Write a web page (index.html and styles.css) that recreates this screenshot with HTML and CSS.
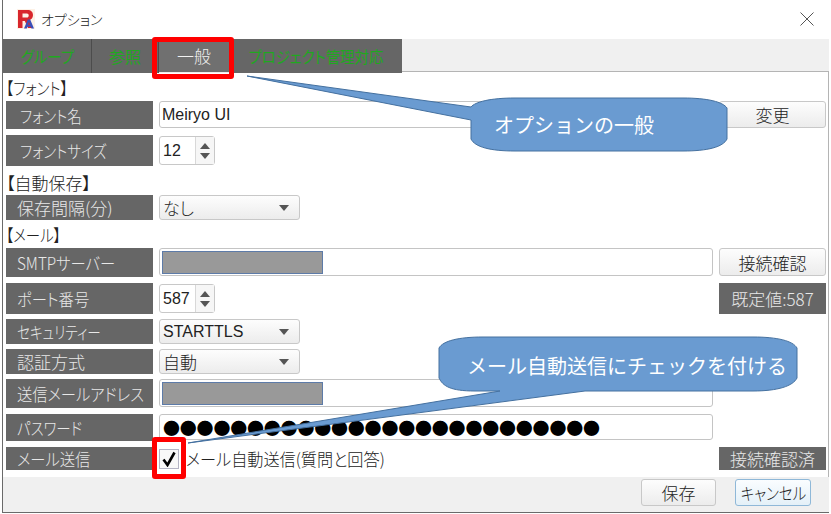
FILE: index.html
```html
<!DOCTYPE html>
<html lang="ja">
<head>
<meta charset="utf-8">
<title>オプション</title>
<link rel="stylesheet" href="styles.css">
</head>
<body>
<div class="window">
  <header class="titlebar">
    <svg class="logo" width="18" height="20" viewBox="0 0 18 20">
      <rect x="0" y="0" width="18" height="20" fill="#fdf1e6"/>
      <path d="M1 1h9.500c3.600 0 5.500 2 5.500 5s-1.700 4.600-3.800 5.200L16 19h-5l-3.200-7H5.500v7H1zM5.500 4.400v4.200h4.300c1.300 0 1.900-.8 1.900-2.100s-.6-2.100-1.900-2.100z" fill="#d8262c"/>
      <path d="M7 19.500l3.800-9h2.400l3.800 9h-2.600l-.6-1.800h-3.400l-.6 1.800zM11 15.800h2l-1-3z" fill="#3b4fb8"/>
    </svg>
    <span class="title">オプション</span>
    <svg class="close" width="14" height="14" viewBox="0 0 14 14"><path d="M.5.5l13 13M13.500.5l-13 13" stroke="#555" stroke-width="1" fill="none"/></svg>
  </header>
  <nav class="tabs">
    <div class="tab tab-group"><span class="sx sx90">グループ</span></div>
    <div class="tab tab-ref">参照</div>
    <div class="tab tab-active">一般</div>
    <div class="tab tab-project"><span class="sx sx90">プロジェクト管理対応</span></div>
  </nav>
  <main class="panel">
    <div class="section section-font"><span class="sx sx85">【フォント】</span></div>

    <div class="row row-fontname">
      <div class="label indent"><span class="sx sx85">フォント名</span></div>
      <div class="input"><span class="latin">Meiryo UI</span></div>
      <div class="btn">変更</div>
    </div>
    <div class="row row-fontsize">
      <div class="label indent"><span class="sx sx85">フォントサイズ</span></div>
      <div class="spin"><span class="spin-val"><span class="latin">12</span></span><span class="spin-arrows"><i class="up"></i><i class="down"></i></span></div>
    </div>

    <div class="section section-save">【自動保存】</div>
    <div class="row row-interval">
      <div class="label">保存間隔(分)</div>
      <div class="select">なし<i class="down"></i></div>
    </div>

    <div class="section section-mail"><span class="sx sx85">【メール】</span></div>
    <div class="row row-smtp">
      <div class="label"><span class="sx sx90">SMTPサーバー</span></div>
      <div class="input"><span class="mask"></span></div>
      <div class="btn">接続確認</div>
    </div>
    <div class="row row-port">
      <div class="label"><span class="sx sx90">ポート番号</span></div>
      <div class="spin"><span class="spin-val"><span class="latin">587</span></span><span class="spin-arrows"><i class="up"></i><i class="down"></i></span></div>
      <div class="note">既定値:587</div>
    </div>
    <div class="row row-security">
      <div class="label"><span class="sx sx80">セキュリティー</span></div>
      <div class="select"><span class="latin">STARTTLS</span><i class="down"></i></div>
    </div>
    <div class="row row-security">
      <div class="label">認証方式</div>
      <div class="select">自動<i class="down"></i></div>
    </div>
    <div class="row row-address">
      <div class="label"><span class="sx sx90">送信メールアドレス</span></div>
      <div class="input"><span class="mask"></span></div>
    </div>
    <div class="row row-password">
      <div class="label"><span class="sx sx85">パスワード</span></div>
      <div class="input dots">●●●●●●●●●●●●●●●●●●●●●●●●●●</div>
    </div>
    <div class="row row-send">
      <div class="label"><span class="sx sx90">メール送信</span></div>
      <div class="check">
        <span class="box"><svg width="16" height="16" viewBox="0 0 16 16"><path d="M2.500 8.500L6.500 14L13.500 1.500" stroke="#000" stroke-width="2.600" fill="none"/></svg></span>
        <span class="sx sx95">メール自動送信(質問と回答)</span>
      </div>
      <div class="note">接続確認済</div>
    </div>
  </main>
  <footer class="footer">
    <div class="btn btn-save">保存</div>
    <div class="btn btn-cancel"><span class="sx sx85 sx-mid">キャンセル</span></div>
  </footer>
</div>

<div class="red red-tab"></div>
<div class="red red-check"></div>
<svg class="callouts" width="831" height="514" viewBox="0 0 831 514">
  <path d="M247 76L471 107C475 102 490 98 515 98H683C708 98 723 102 727 108V139C723 147 708 151 683 151H515C490 151 475 147 471 139V120Z" fill="#6a9bd1" stroke="#44709f" stroke-width="1"/>
  <path d="M188 443L500 391H475C450 391 443 386 439 378V348C443 341 458 337 483 337H753C778 337 793 341 797 348V378C793 386 778 391 753 391H585Z" fill="#6a9bd1" stroke="#44709f" stroke-width="1"/>
</svg>
<div class="callout-text callout-one">オプションの一般</div>
<div class="callout-text callout-two">メール自動送信にチェックを付ける</div>
</body>
</html>
```

FILE: styles.css
```css
* { box-sizing: border-box; }
html, body { margin: 0; padding: 0; background: #fff; }
body {
  position: relative;
  width: 831px;
  height: 514px;
  overflow: hidden;
  font-family: "Noto Sans CJK JP", "Liberation Sans", sans-serif;
  font-size: 17px;
  font-weight: 300;
  font-feature-settings: "palt";
  color: #222;
  line-height: 1;
}
.sx { display: inline-block; white-space: nowrap; transform-origin: left center; }
.sx-mid { transform-origin: center; }
.sx95 { transform: scaleX(.95); }
.sx90 { transform: scaleX(.9); }
.sx85 { transform: scaleX(.85); }
.sx80 { transform: scaleX(.8); }
.latin { font-family: "Liberation Sans", sans-serif; font-size: 16px; }

.window {
  margin-left: 2px;
  width: 827px;
  height: 513px;
  border-left: 1px solid #6a6a6a;
  border-bottom: 1px solid #6a6a6a;
  display: flex;
  flex-direction: column;
}
.titlebar {
  height: 39px;
  flex: none;
  display: flex;
  align-items: center;
  padding-left: 14px;
  padding-right: 15px;
}
.logo { flex: none; margin-bottom: 1px; }
.title { margin-left: 6px; font-size: 14px; margin-bottom: 2px; }
.close { margin-left: auto; margin-bottom: 2px; }

.tabs {
  height: 32px;
  flex: none;
  background: #f0f0f0;
  display: flex;
  position: relative;
  z-index: 1;
}
.tab {
  height: 34px;
  background: #666;
  color: #20a820;
  display: flex;
  align-items: center;
  justify-content: center;
  font-size: 16px;
  font-weight: 400;
  border-right: 1px solid #4c4c4c;
  white-space: nowrap;
}
.tab-group { width: 89px; }
.tab-group .sx, .tab-project .sx { transform-origin: center; }
.tab-ref { width: 67px; }
.tab-active { width: 71px; background: #707070; color: #f2f2f2; border-bottom: 1px solid #eee; font-size: 17px; font-weight: 300; }
.tab-project { width: 172px; border-right: 0; }

.panel {
  height: 406px;
  flex: none;
  background: #fff;
  border-top: 1px solid #b4b4b4;
  border-right: 1px solid #b4b4b4;
  padding: 2px 2px 0 3px;
  display: flex;
  flex-direction: column;
}
.section { height: 24px; display: flex; align-items: center; color: #222; }
.section-font { height: 26px; margin-bottom: 1px; }
.section-save { margin-top: 4px; margin-bottom: 1px; }
.section-mail { margin-top: 2px; margin-bottom: 2px; }

.row {
  display: grid;
  grid-template-columns: 147px 554px 107px;
  column-gap: 6px;
  flex: none;
}
.row-fontname { height: 28px; margin-bottom: 6px; }
.row-fontsize { height: 31px; }
.row-interval { height: 25px; }
.row-smtp { height: 29px; margin-bottom: 6px; }
.row-port { height: 31px; margin-bottom: 5px; }
.row-security { height: 25px; margin-bottom: 5px; }
.row-address { height: 29px; margin-bottom: 6px; }
.row-password { height: 27px; margin-bottom: 6px; }
.row-send { height: 23px; }

.label {
  background: #666;
  color: #e8e8e8;
  display: flex;
  align-items: center;
  padding-left: 11px;
  white-space: nowrap;
}
.indent { padding-left: 14px; }
.input {
  background: #fff;
  border: 1px solid #c4c4c4;
  border-radius: 3px;
  display: flex;
  align-items: center;
  padding-left: 2px;
  color: #222;
  margin-bottom: 1px;
}
.mask {
  display: block;
  width: 161px;
  height: 23px;
  background: #999;
  border: 1px solid #5d7ba8;
}
.dots { font-size: 17px; font-feature-settings: normal; color: #000; letter-spacing: -.2px; padding-left: 3px; }
.btn {
  background: linear-gradient(#fdfdfd, #ececec);
  border: 1px solid #c8c8c8;
  border-radius: 3px;
  display: flex;
  align-items: center;
  justify-content: center;
  color: #222;
  margin-bottom: 1px;
  white-space: nowrap;
}
.spin {
  width: 56px;
  margin: 1px 0;
  background: #fff;
  border: 1px solid #c8c8c8;
  border-radius: 3px;
  display: flex;
}
.spin-val { width: 36px; display: flex; align-items: center; padding-left: 3px; border-right: 1px solid #d8d8d8; color: #222; }
.spin-arrows { flex: 1; display: flex; flex-direction: column; align-items: center; justify-content: center; gap: 4px; background: #f6f6f6; }
.up, .down { display: block; width: 0; height: 0; border-left: 5px solid transparent; border-right: 5px solid transparent; }
.up { border-bottom: 6px solid #555; }
.down { border-top: 6px solid #555; }
.select {
  width: 141px;
  background: linear-gradient(#fdfdfd, #ececec);
  border: 1px solid #c8c8c8;
  border-radius: 3px;
  display: flex;
  align-items: center;
  justify-content: space-between;
  padding: 0 10px 0 3px;
  color: #222;
}
.note {
  background: #666;
  color: #e8e8e8;
  display: flex;
  align-items: center;
  justify-content: center;
  white-space: nowrap;
}
.check { display: flex; align-items: center; gap: 7px; white-space: nowrap; color: #222; }
.box {
  width: 20px;
  height: 20px;
  border: 1px solid #b4b4c4;
  background: #f8f8f8;
  display: flex;
  align-items: center;
  justify-content: center;
}
.footer {
  flex: 1;
  background: #f0f0f0;
  display: flex;
  justify-content: flex-end;
  gap: 19px;
  padding: 2px 18px 6px 0;
}
.btn-save { width: 75px; margin: 0; }
.btn-cancel {
  width: 76px;
  margin: 0;
  border-color: #8fb8d8;
  background: linear-gradient(#fafdff, #e4f0f8);
}

.red { position: absolute; border: 5px solid #f00; border-radius: 3px; z-index: 3; }
.red-tab { left: 152px; top: 37px; width: 82px; height: 42px; }
.red-check { left: 152px; top: 437px; width: 34px; height: 42px; }
.callouts { position: absolute; left: 0; top: 0; z-index: 2; }
.callout-text { position: absolute; color: #fff; font-size: 20px; white-space: nowrap; z-index: 4; font-feature-settings: normal; font-weight: 400; }
.callout-one { left: 494px; top: 115px; }
.callout-two { left: 467px; top: 356px; }
```
